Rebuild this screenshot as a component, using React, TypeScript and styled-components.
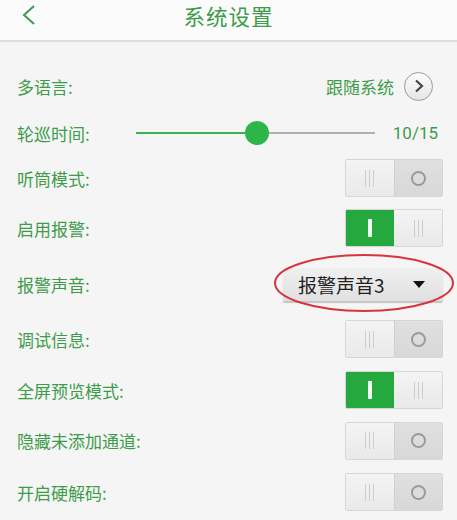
import React from 'react'
import styled, { createGlobalStyle } from 'styled-components'

const GREEN_TEXT = '#3d9c4a'
const GREEN_FILL = '#25a83d'

const GlobalStyle = createGlobalStyle`
  html, body {
    margin: 0;
    padding: 0;
    background: #f5f5f5;
  }
  body {
    font-family: Roboto, "Noto Sans CJK SC", sans-serif;
  }
`

const Page = styled.div`
  width: 457px;
  height: 520px;
  overflow: hidden;
  background: #f5f5f5;
  display: flex;
  flex-direction: column;
`

const Header = styled.div`
  height: 40px;
  flex: none;
  display: flex;
  align-items: flex-start;
  justify-content: center;
  position: relative;
  background: #fbfbfb;
  border-bottom: 2px solid #dedede;
`

const BackButton = styled.svg`
  position: absolute;
  left: 20px;
  top: 3px;
  width: 18px;
  height: 24px;
  fill: none;
  stroke: ${GREEN_TEXT};
  stroke-width: 2px;
`

const Title = styled.div`
  font-family: "Noto Sans CJK SC", sans-serif;
  font-size: 21.5px;
  line-height: 31px;
  color: ${GREEN_TEXT};
  letter-spacing: 1px;
`

const List = styled.div`
  padding: 20px 14px 0 17px;
  display: flex;
  flex-direction: column;
`

const Row = styled.div<{ $h: number }>`
  height: ${p => p.$h}px;
  display: flex;
  align-items: center;
  justify-content: space-between;
  position: relative;
`

const Label = styled.div`
  font-family: "Noto Sans CJK SC", sans-serif;
  font-size: 17px;
  color: ${GREEN_TEXT};
  white-space: nowrap;
`

const Value = styled.div`
  display: flex;
  align-items: center;
  gap: 10px;
  margin-right: 10px;
  font-family: "Noto Sans CJK SC", sans-serif;
  font-size: 17px;
  color: ${GREEN_TEXT};
`

const RoundArrow = styled.div`
  width: 27px;
  height: 27px;
  border-radius: 50%;
  border: 1.5px solid #9a9a9a;
  background: linear-gradient(#fdfdfd, #e6e6e6);
  display: flex;
  align-items: center;
  justify-content: center;

  svg {
    width: 10px;
    height: 14px;
    fill: none;
    stroke: #444;
    stroke-width: 2.2px;
  }
`

const SliderBox = styled.div`
  display: flex;
  align-items: center;
  flex: 1;
  margin-left: 46px;
  margin-right: 5px;
`

const Track = styled.div`
  position: relative;
  height: 2px;
  width: 239px;
  background: #b0b0b0;
`

const TrackFill = styled.div`
  position: absolute;
  left: 0;
  top: 0;
  height: 2px;
  background: #3cb054;
`

const Thumb = styled.div`
  position: absolute;
  top: -11px;
  width: 24px;
  height: 24px;
  margin-left: -12px;
  border-radius: 50%;
  background: #2eb548;
`

const SliderValue = styled.div`
  margin-left: auto;
  font-family: Roboto, sans-serif;
  font-size: 17px;
  color: ${GREEN_TEXT};
`

const Toggle = styled.div`
  width: 98px;
  height: 38px;
  display: flex;
  border: 1px solid #d6d6d6;
  border-radius: 2px;
  box-sizing: border-box;
  overflow: hidden;
`

const Half = styled.div<{ $tone: 'on' | 'light' | 'dark' }>`
  flex: 1;
  display: flex;
  align-items: center;
  justify-content: center;
  gap: 3px;
  background: ${p =>
    p.$tone === 'on'
      ? GREEN_FILL
      : p.$tone === 'light'
      ? 'linear-gradient(#f4f4f4, #e9e9e9)'
      : 'linear-gradient(#e0e0e0, #d8d8d8)'};
  border-left: ${p => (p.$tone === 'dark' ? '1px solid #d0d0d0' : 'none')};
`

const Grip = styled.span`
  width: 1px;
  height: 17px;
  background: #cdcdcd;
`

const Ring = styled.span`
  width: 11px;
  height: 11px;
  border-radius: 50%;
  border: 2px solid #9a9a9a;
`

const OnBar = styled.span`
  width: 4px;
  height: 18px;
  border-radius: 1px;
  background: #f4fff4;
`

const Grips = () => (
  <>
    <Grip />
    <Grip />
    <Grip />
  </>
)

const Switch = ({ on }: { on: boolean }) =>
  on ? (
    <Toggle>
      <Half $tone="on">
        <OnBar />
      </Half>
      <Half $tone="light">
        <Grips />
      </Half>
    </Toggle>
  ) : (
    <Toggle>
      <Half $tone="light">
        <Grips />
      </Half>
      <Half $tone="dark">
        <Ring />
      </Half>
    </Toggle>
  )

const Select = styled.div`
  width: 160px;
  height: 33px;
  box-sizing: border-box;
  padding: 0 18px 0 15px;
  display: flex;
  align-items: center;
  justify-content: space-between;
  background: linear-gradient(#f0f0f0, #e0e0e0);
  border-radius: 2px;
  box-shadow: 0 2px 1px #c4c4c4;
  font-family: "Noto Sans CJK SC", sans-serif;
  font-size: 19px;
  color: #222;
`

const Caret = styled.span`
  width: 0;
  height: 0;
  border-left: 6px solid transparent;
  border-right: 6px solid transparent;
  border-top: 7px solid #111;
`

// red ring drawn over the sound picker
const Mark = styled.svg`
  position: absolute;
  left: 255px;
  top: -4px;
  width: 184px;
  height: 62px;
  fill: none;
  stroke: #d8343f;
  stroke-width: 2px;
  pointer-events: none;
`

const switches: { label: string; on: boolean; h: number }[] = [
  { label: '调试信息:', on: false, h: 54 },
  { label: '全屏预览模式:', on: true, h: 48 },
  { label: '隐藏未添加通道:', on: false, h: 53 },
  { label: '开启硬解码:', on: false, h: 50 },
]

export default function App() {
  const tour = 10
  const total = 15
  const pct = (tour / total) * 100 * 0.76

  return (
    <Page>
      <GlobalStyle />
      <Header>
        <BackButton viewBox="0 0 18 24">
          <polyline points="14 3 4 12 14 21" />
        </BackButton>
        <Title>系统设置</Title>
      </Header>

      <List>
        <Row $h={48}>
          <Label>多语言:</Label>
          <Value>
            跟随系统
            <RoundArrow>
              <svg viewBox="0 0 10 14">
                <polyline points="2 1.5 8 7 2 12.5" />
              </svg>
            </RoundArrow>
          </Value>
        </Row>

        <Row $h={46}>
          <Label>轮巡时间:</Label>
          <SliderBox>
            <Track>
              <TrackFill style={{ width: `${pct}%` }} />
              <Thumb style={{ left: `${pct}%` }} />
            </Track>
            <SliderValue>
              {tour}/{total}
            </SliderValue>
          </SliderBox>
        </Row>

        <Row $h={44}>
          <Label>听筒模式:</Label>
          <Switch on={false} />
        </Row>

        <Row $h={56}>
          <Label>启用报警:</Label>
          <Switch on={true} />
        </Row>

        <Row $h={56}>
          <Label>报警声音:</Label>
          <Select>
            报警声音3
            <Caret />
          </Select>
          <Mark viewBox="0 0 184 62">
            <ellipse cx="92" cy="31" rx="89" ry="28" />
          </Mark>
        </Row>

        {switches.map(s => (
          <Row key={s.label} $h={s.h}>
            <Label>{s.label}</Label>
            <Switch on={s.on} />
          </Row>
        ))}
      </List>
    </Page>
  )
}
